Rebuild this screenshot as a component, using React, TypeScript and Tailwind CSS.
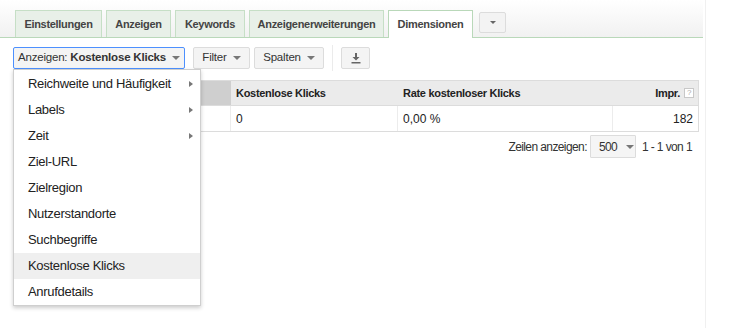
import React from "react";

const tabs = [
  { label: "Einstellungen", w: "w-[87px]" },
  { label: "Anzeigen", w: "w-[65px]" },
  { label: "Keywords", w: "w-[70px]" },
  { label: "Anzeigenerweiterungen", w: "w-[135px]" },
];

const menuItems: { label: string; sub?: boolean; active?: boolean }[] = [
  { label: "Reichweite und Häufigkeit", sub: true },
  { label: "Labels", sub: true },
  { label: "Zeit", sub: true },
  { label: "Ziel-URL" },
  { label: "Zielregion" },
  { label: "Nutzerstandorte" },
  { label: "Suchbegriffe" },
  { label: "Kostenlose Klicks", active: true },
  { label: "Anrufdetails" },
];

const Caret = () => (
  <span className="inline-block ml-[6px] w-0 h-0 border-l-[4px] border-r-[4px] border-t-[4px] border-l-transparent border-r-transparent border-t-[#777] align-middle" />
);

const App: React.FC = () => {
  return (
    <div className="w-[738px] h-[328px] bg-white overflow-hidden font-['Liberation_Sans',Arial,sans-serif] text-[#222]">
      <div className="w-[706px] h-full border-r border-[#f0f0f0] relative">
        {/* tab bar */}
        <div className="h-[38px] w-[703px] bg-gradient-to-b from-white to-[#f1f1f1] border-b border-[#b9d8b9] flex items-end pl-[15px] gap-[4px]">
          {tabs.map((t) => (
            <div
              key={t.label}
              className={`${t.w} h-[27px] flex items-center justify-center bg-[#e8f0e8] border border-b-0 border-[#c6dfc6] text-[11px] font-bold tracking-[-0.3px] text-[#444]`}
            >
              {t.label}
            </div>
          ))}
          <div className="w-[85px] h-[28px] -mb-px flex items-center justify-center bg-white border border-b-0 border-[#b9d8b9] text-[11px] font-bold tracking-[-0.3px] text-[#444]">
            Dimensionen
          </div>
          <div className="self-start mt-[12px] ml-[2px] w-[27px] h-[21px] flex items-center justify-center bg-[#f3f3f3] border border-[#dcdcdc] rounded-[2px]">
            <span className="w-0 h-0 border-l-[3px] border-r-[3px] border-t-[3px] border-l-transparent border-r-transparent border-t-[#666]" />
          </div>
        </div>

        {/* toolbar */}
        <div className="flex items-center mt-[9px] pl-[13px] h-[22px] text-[11.5px] tracking-[-0.2px] text-[#333]">
          <div className="w-[172px] h-[22px] flex items-center justify-center bg-[#f4f4f4] border border-[#4d90fe] rounded-[2px]">
            Anzeigen:&nbsp;<span className="font-bold">Kostenlose Klicks</span>
            <Caret />
          </div>
          <div className="ml-[8px] w-[57px] h-[22px] flex items-center justify-center bg-[#f4f4f4] border border-[#dcdcdc] rounded-[2px]">
            Filter
            <Caret />
          </div>
          <div className="ml-[4px] w-[70px] h-[22px] flex items-center justify-center bg-[#f4f4f4] border border-[#dcdcdc] rounded-[2px]">
            Spalten
            <Caret />
          </div>
          <div className="ml-[8px] w-px h-[26px] bg-[#ebebeb]" />
          <div className="ml-[8px] h-[22px] w-[29px] flex items-center justify-center bg-[#f4f4f4] border border-[#dcdcdc] rounded-[2px]">
            <svg width="10" height="11" viewBox="0 0 10 11">
              <path d="M4 0h2v4h2.5L5 7.5 1.5 4H4z" fill="#666" />
              <rect x="0.5" y="9" width="9" height="1.5" fill="#666" />
            </svg>
          </div>
        </div>

        {/* table */}
        <div className="mt-[11px] ml-[13px] w-[686px] border border-[#dcdcdc] text-[12px]">
          <div className="flex h-[25px] bg-[#ebebeb] border-b border-[#dcdcdc] font-bold text-[11px] tracking-[-0.3px] text-[#222]">
            <div className="w-[217px] bg-[#cfcfcf]" />
            <div className="w-[167px] flex items-center pl-[5px]">Kostenlose Klicks</div>
            <div className="w-[215px] flex items-center pl-[5px]">Rate kostenloser Klicks</div>
            <div className="flex-1 flex items-center justify-end pr-[4px]">
              Impr.
              <span className="ml-[4px] w-[10px] h-[10px] border border-[#c8c8c8] bg-white text-[8px] leading-[8px] text-[#aaa] font-normal flex items-center justify-center">?</span>
            </div>
          </div>
          <div className="flex h-[25px] bg-white">
            <div className="w-[217px] border-r border-[#ececec]" />
            <div className="w-[167px] flex items-center pl-[5px] border-r border-[#ececec]">0</div>
            <div className="w-[215px] flex items-center pl-[5px] border-r border-[#ececec]">0,00 %</div>
            <div className="flex-1 flex items-center justify-end pr-[5px]">182</div>
          </div>
        </div>

        {/* pagination */}
        <div className="flex items-center justify-end w-[692px] mt-[3px] h-[23px] text-[12px] tracking-[-0.6px] text-[#333]">
          <span>Zeilen anzeigen:</span>
          <div className="ml-[3px] w-[46px] h-[23px] flex items-center pl-[8px] bg-[#f5f5f5] border border-[#dcdcdc] rounded-[1px]">
            500
            <span className="ml-[9px] w-0 h-0 border-l-[4px] border-r-[4px] border-t-[4px] border-l-transparent border-r-transparent border-t-[#777]" />
          </div>
          <span className="ml-[6px]">1 - 1 von 1</span>
        </div>

        {/* dropdown menu */}
        <div className="absolute left-[13px] top-[69px] w-[188px] bg-white border border-[#cfcfcf] shadow-[0_2px_4px_rgba(0,0,0,0.2)] pt-px">
          {menuItems.map((m) => (
            <div
              key={m.label}
              className={`h-[26px] flex items-center pl-[14px] pr-[7px] text-[13px] tracking-[-0.3px] text-[#222] ${m.active ? "bg-[#efefef]" : ""}`}
            >
              <span className="flex-1">{m.label}</span>
              {m.sub && (
                <span className="w-0 h-0 border-t-[3px] border-b-[3px] border-l-[4px] border-t-transparent border-b-transparent border-l-[#777]" />
              )}
            </div>
          ))}
        </div>
      </div>
    </div>
  );
};

export default App;
